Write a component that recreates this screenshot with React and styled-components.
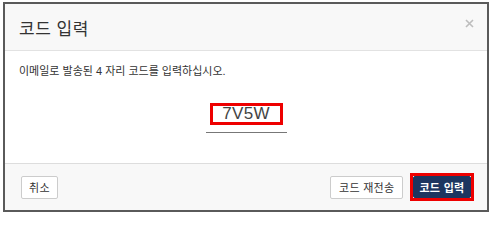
import React from "react";
import styled, { createGlobalStyle } from "styled-components";

const GlobalStyle = createGlobalStyle`
    html, body {
        margin: 0;
        padding: 0;
        background: #ffffff;
    }
    body {
        font-family: "Liberation Sans", "Noto Sans CJK KR", sans-serif;
    }
`;

const Page = styled.div`
    padding: 2px 0 0 3px;
`;

const Dialog = styled.div`
    box-sizing: border-box;
    width: 486px;
    height: 210px;
    border: 2px solid #5a5a5a;
    display: flex;
    flex-direction: column;
    background: #ffffff;
`;

const Header = styled.div`
    height: 46px;
    flex: none;
    display: flex;
    align-items: center;
    justify-content: space-between;
    padding: 0 13px 0 14px;
    background: #f8f8f8;
    border-bottom: 1px solid #e2e2e2;
`;

const Title = styled.h4`
    margin: 0;
    font-size: 17px;
    font-weight: normal;
    color: #333333;
    letter-spacing: 0.5px;
`;

const Close = styled.button`
    border: 0;
    background: none;
    padding: 0;
    margin-top: -8px;
    width: 9px;
    height: 9px;
    display: flex;
    cursor: pointer;
`;

const Body = styled.div`
    flex: 1;
    padding: 13px 14px 0;
    display: flex;
    flex-direction: column;
    align-items: center;
`;

const Message = styled.p`
    align-self: stretch;
    margin: 0;
    font-size: 11px;
    line-height: 14px;
    color: #333333;
`;

const CodeField = styled.div`
    margin-top: 25px;
    width: 81px;
    padding-bottom: 7px;
    border-bottom: 1px solid #777777;
    display: flex;
    justify-content: center;
`;

const CodeBox = styled.div`
    box-sizing: border-box;
    width: 73px;
    height: 22px;
    border: 3px solid #ee0000;
    display: flex;
    align-items: center;
    justify-content: center;
    font-size: 17px;
    color: #444444;
    letter-spacing: 0.3px;
`;

const Footer = styled.div`
    height: 46px;
    flex: none;
    display: flex;
    align-items: center;
    padding: 0 13px 0 16px;
    background: #f8f8f8;
    border-top: 1px solid #dddddd;
`;

const Button = styled.button`
    box-sizing: border-box;
    height: ${(p) => (p.$primary ? 22 : 23)}px;
    padding: 0 ${(p) => p.$pad || 8}px;
    border: 1px solid ${(p) => (p.$primary ? "#1d3660" : "#cccccc")};
    border-radius: 2px;
    background: ${(p) => (p.$primary ? "#1d3660" : "#ffffff")};
    color: ${(p) => (p.$primary ? "#ffffff" : "#333333")};
    font-family: "Liberation Sans", "Noto Sans CJK KR", sans-serif;
    font-size: 11px;
    letter-spacing: 0.3px;
    font-weight: ${(p) => (p.$primary ? "bold" : "normal")};
    cursor: pointer;
`;

const Highlight = styled.div`
    display: flex;
    border: 3px solid #ee0000;
    margin-left: 7px;
`;

const Spacer = styled.div`
    flex: 1;
`;

const App = () => {
    return (
        <Page>
            <GlobalStyle />
            <Dialog>
                <Header>
                    <Title>코드 입력</Title>
                    <Close aria-label="close">
                        <svg width="9" height="9" viewBox="0 0 9 9">
                            <path d="M1 1L8 8M8 1L1 8" stroke="#bdbdbd" strokeWidth="1.6" />
                        </svg>
                    </Close>
                </Header>
                <Body>
                    <Message>이메일로 발송된 4 자리 코드를 입력하십시오.</Message>
                    <CodeField>
                        <CodeBox>7V5W</CodeBox>
                    </CodeField>
                </Body>
                <Footer>
                    <Button $pad={7}>취소</Button>
                    <Spacer />
                    <Button $pad={7.5}>코드 재전송</Button>
                    <Highlight>
                        <Button $primary $pad={5.5}>코드 입력</Button>
                    </Highlight>
                </Footer>
            </Dialog>
        </Page>
    );
};

export default App;
